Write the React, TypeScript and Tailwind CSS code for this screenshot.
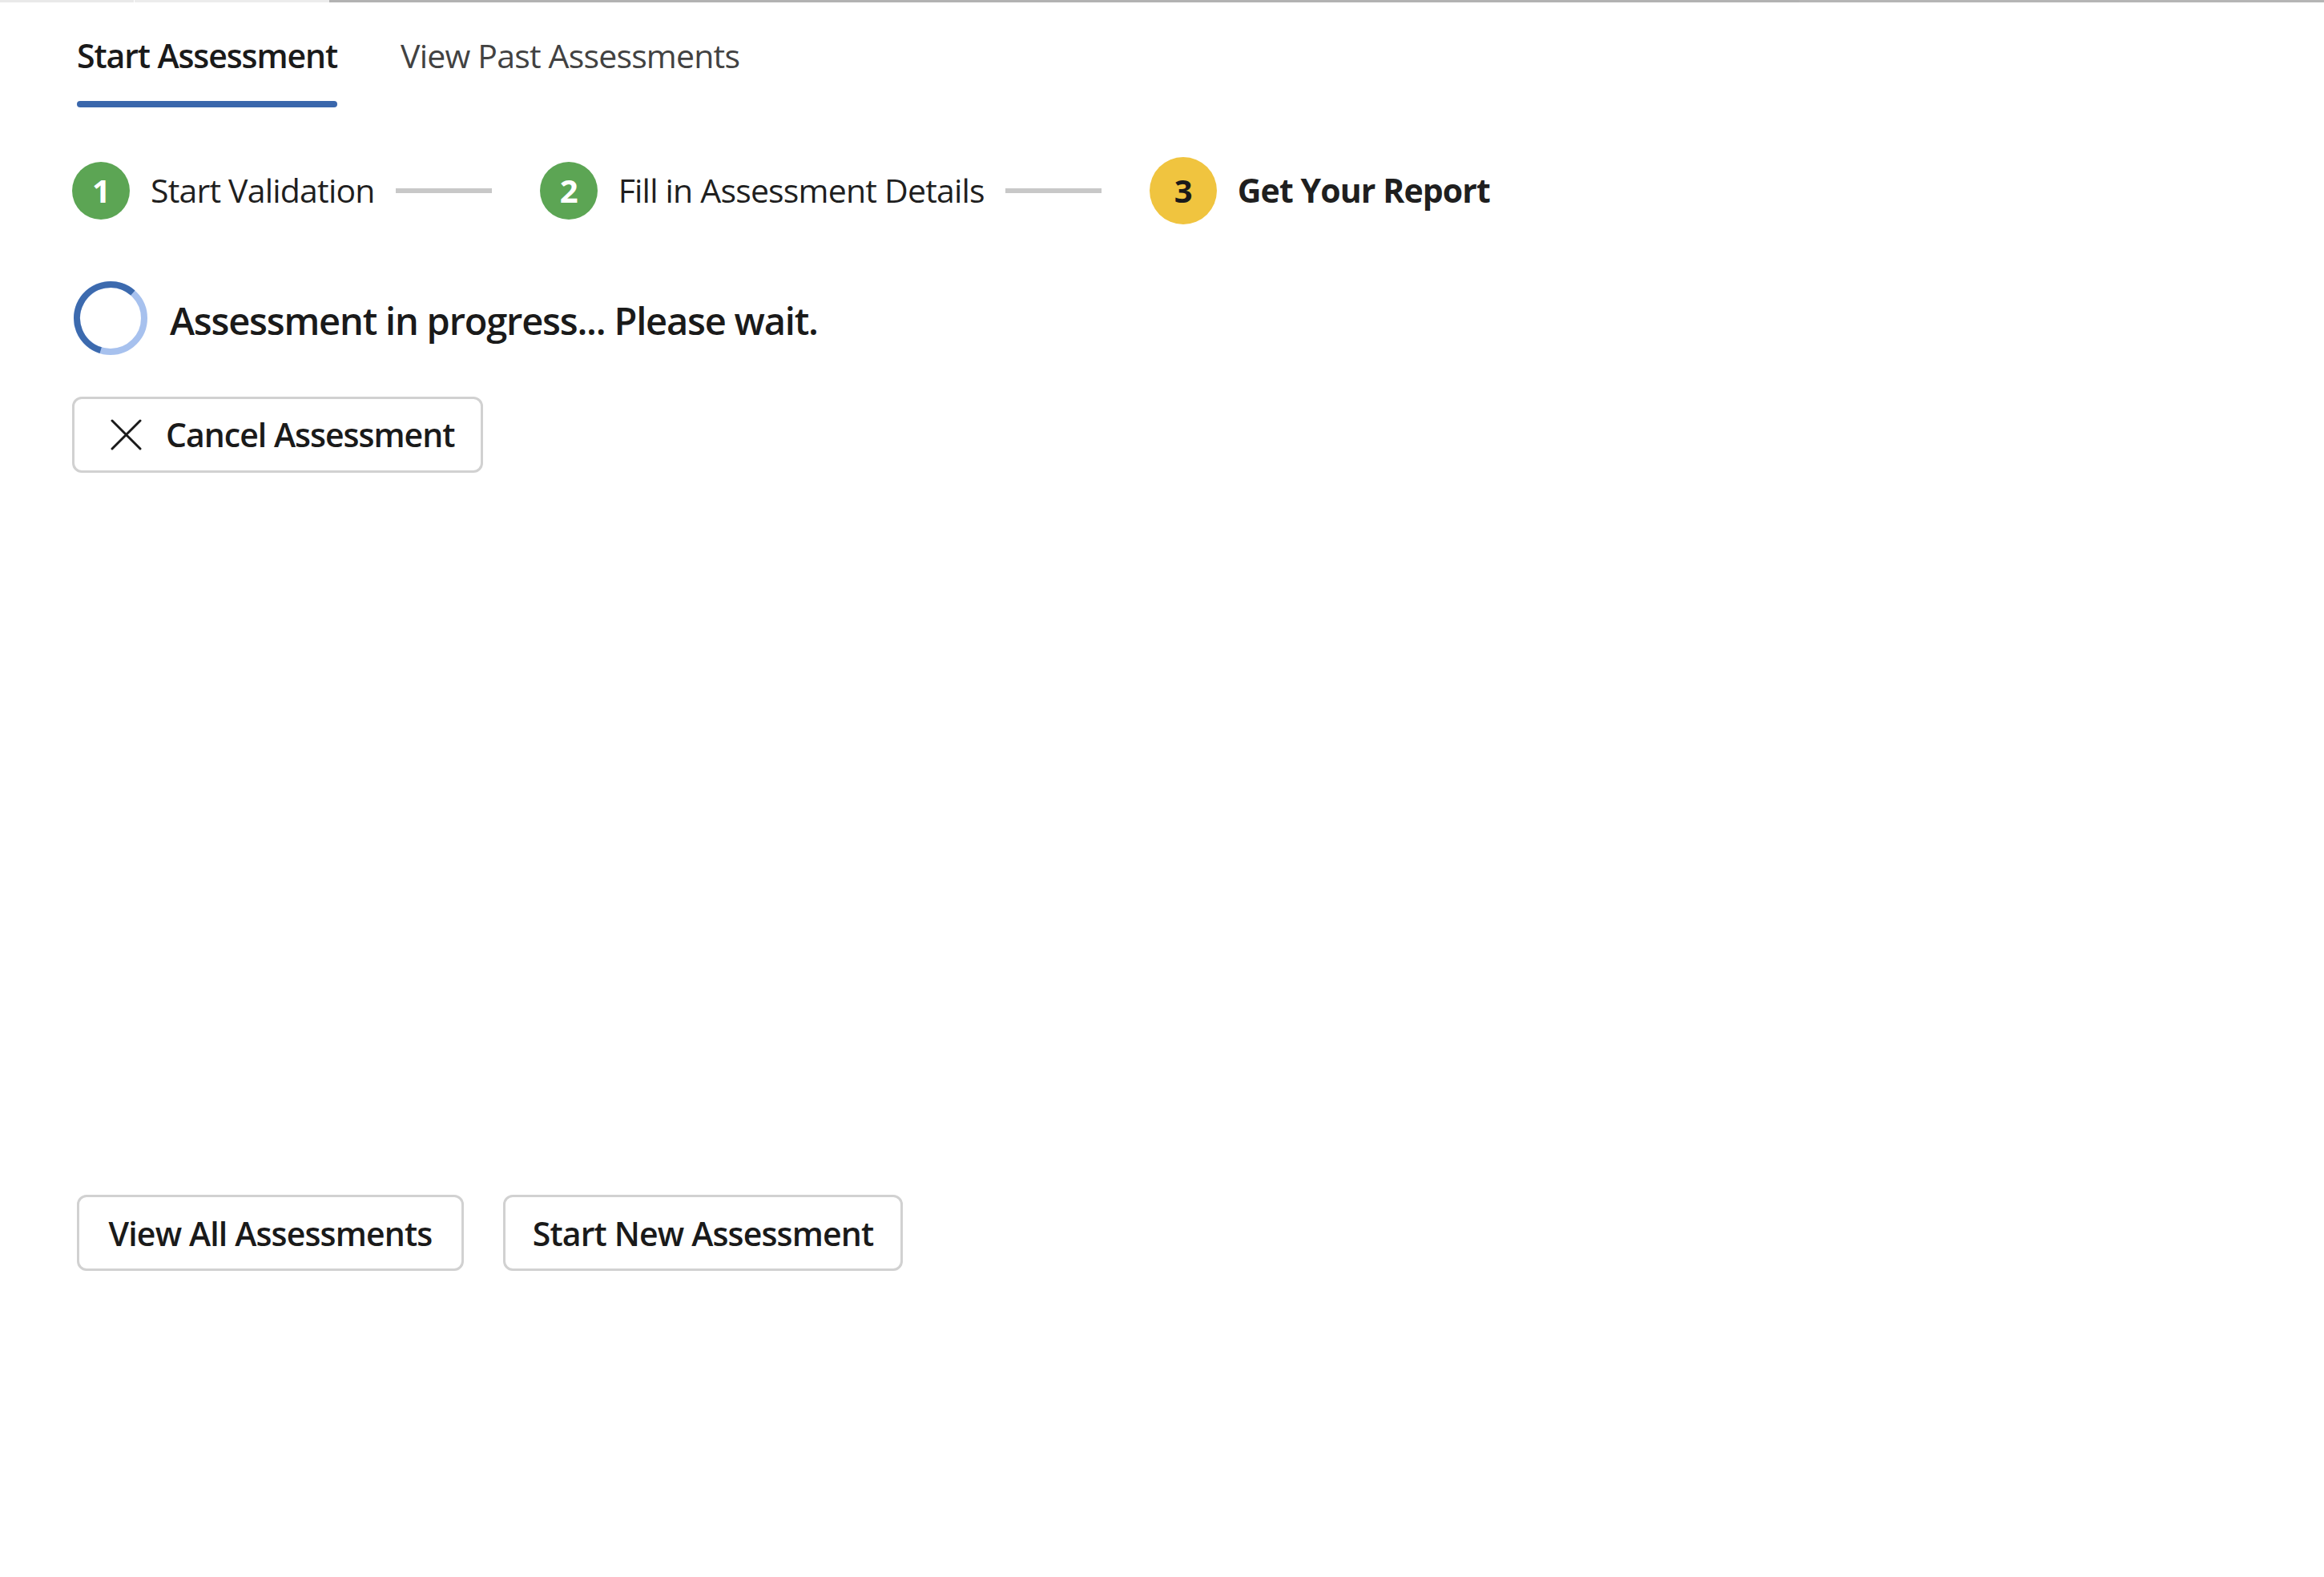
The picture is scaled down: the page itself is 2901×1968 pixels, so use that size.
const font = "font-['Open_Sans','Noto_Sans',sans-serif]";

function StepCircle({ n, done, big }: { n: number; done?: boolean; big?: boolean }) {
  return (
    <div
      className={
        (big ? 'h-[84px] w-[84px] ' : 'h-[72px] w-[72px] ') +
        (done ? 'bg-[#5ca554] text-white ' : 'bg-[#f0c43f] text-[#1a1a1a] ') +
        'flex shrink-0 items-center justify-center rounded-full text-[40px] font-bold leading-none'
      }
    >
      {n}
    </div>
  );
}

function Connector() {
  return <div className="ml-[26px] mr-[60px] h-[6px] w-[120px] shrink-0 bg-[#c8c8c8]" />;
}

function Spinner() {
  return (
    <svg width="92" height="92" viewBox="0 0 92 92" className="shrink-0">
      <circle cx="46" cy="46" r="42" fill="none" stroke="#a7c1ee" strokeWidth="8" />
      <path d="M33.7 86.17 A42 42 0 1 1 73.88 14.59" fill="none" stroke="#3c6aae" strokeWidth="8" />
    </svg>
  );
}

function CloseIcon() {
  return (
    <svg width="39" height="39" viewBox="0 0 39 39" className="shrink-0">
      <path d="M2 2 L37 37 M37 2 L2 37" stroke="#1a1a1a" strokeWidth="3" strokeLinecap="round" />
    </svg>
  );
}

export default function App() {
  return (
    <div className={`min-h-screen bg-white text-[#1f1f1f] ${font}`}>
      <div className="flex h-[3px]">
        <div className="w-[167px] bg-[#e9e9e9]" />
        <div className="w-[1px] bg-white" />
        <div className="w-[243px] bg-[#ececec]" />
        <div className="w-[1835px] bg-[#b2b2b2]" />
        <div className="flex-1 bg-[#b5b5b5]" />
      </div>

      {/* tabs */}
      <div className="flex items-start gap-[79px] pl-[96px] pt-[36px]">
        <button className="flex flex-col items-stretch">
          <span className="text-[41px] font-semibold leading-[60px] tracking-[-1.1px] text-[#1a1a1a]">Start Assessment</span>
          <span className="mt-[27px] h-[8px] rounded-full bg-[#3a67ac]" />
        </button>
        <button className="text-[41px] leading-[60px] tracking-[-0.8px] text-[#424242]">View Past Assessments</button>
      </div>

      <div className="pl-[90px]">
        {/* stepper */}
        <div className="mt-[62px] flex h-[84px] items-center text-[41px] tracking-[-0.8px]">
          <StepCircle n={1} done />
          <span className="ml-[26px]">Start Validation</span>
          <Connector />
          <StepCircle n={2} done />
          <span className="ml-[26px]">Fill in Assessment Details</span>
          <Connector />
          <StepCircle n={3} big />
          <span className="ml-[26px] font-bold tracking-[-0.9px]">Get Your Report</span>
        </div>

        {/* progress */}
        <div className="mt-[71px] flex items-center gap-[28px] pl-[2px]">
          <Spinner />
          <span className="pt-[6px] text-[47px] font-semibold leading-[66px] tracking-[-1.2px] text-[#1a1a1a]">
            Assessment in progress... Please wait.
          </span>
        </div>

        <button className="mt-[52px] flex h-[95px] w-[513px] items-center gap-[30px] rounded-[12px] border-[3px] border-[#d1d1d1] bg-white pl-[45px] text-[41px] font-semibold tracking-[-1px] text-[#1a1a1a]">
          <CloseIcon />
          Cancel Assessment
        </button>

        <div className="ml-[6px] mt-[901px] flex gap-[49px]">
          <button className="flex h-[95px] w-[483px] items-center justify-center rounded-[12px] border-[3px] border-[#d1d1d1] bg-white pt-[3px] text-[41px] font-semibold tracking-[-0.85px] text-[#1a1a1a]">
            View All Assessments
          </button>
          <button className="flex h-[95px] w-[499px] items-center justify-center rounded-[12px] border-[3px] border-[#d1d1d1] bg-white pt-[3px] text-[41px] font-semibold tracking-[-0.85px] text-[#1a1a1a]">
            Start New Assessment
          </button>
        </div>
      </div>
    </div>
  );
}
